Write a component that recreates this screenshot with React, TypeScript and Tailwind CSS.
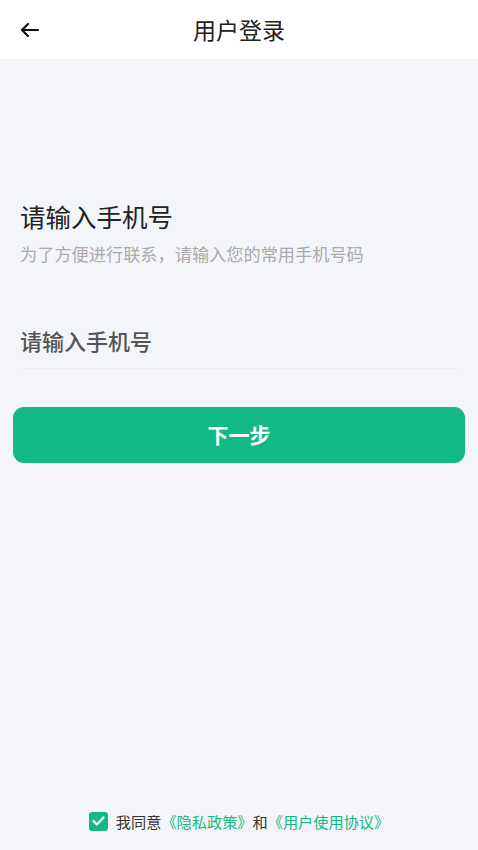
import React, { useState } from 'react'

const font = { fontFamily: '"Noto Sans CJK SC", "Noto Sans", sans-serif' }

const App = () => {
    const [phone, setPhone] = useState('')
    const [agree, setAgree] = useState(true)

    return (
        <div className="w-full h-[850px] bg-[#f4f5f9] flex flex-col text-[#222]" style={font}>
            {/* header */}
            <div className="h-[59px] bg-white flex items-center px-5 relative">
                <svg width="19" height="16" viewBox="0 0 19 16" fill="none" stroke="#111" strokeWidth="2.2" strokeLinecap="round" strokeLinejoin="round">
                    <path d="M18 8H2" />
                    <path d="M8 2L2 8l6 6" />
                </svg>
                <div className="absolute inset-x-0 text-center text-[23px] leading-none text-[#222] pointer-events-none">用户登录</div>
            </div>

            <div className="px-5 pt-[140px]">
                <div className="text-[25.5px] leading-[34px] text-[#222]">请输入手机号</div>
                <div className="mt-[9px] text-[17.2px] leading-[24px] text-[#aaa]">为了方便进行联系，请输入您的常用手机号码</div>

                <div className="mt-[58px] border-b border-[#eceef2] pb-[12px]">
                    <input
                        value={phone}
                        onChange={(e) => setPhone(e.target.value)}
                        placeholder="请输入手机号"
                        className="w-full bg-transparent outline-none text-[22px] leading-[32px] font-medium text-[#333] placeholder:text-[#555]"
                        style={font}
                    />
                </div>
            </div>

            <div className="px-[13px] mt-[38px]">
                <button className="w-full h-[56px] rounded-[11px] bg-[#12b886] text-white text-[21px] font-semibold" style={font}>
                    下一步
                </button>
            </div>

            <div className="flex-1" />

            <div className="flex items-center justify-center gap-2 pb-[19px] text-[15.2px] leading-5">
                <button
                    onClick={() => setAgree(!agree)}
                    className={`w-[19px] h-[19px] rounded-[3px] flex items-center justify-center ${agree ? 'bg-[#12b886]' : 'bg-white border border-[#ccc]'}`}
                >
                    {agree && (
                        <svg width="13" height="10" viewBox="0 0 13 10" fill="none" stroke="white" strokeWidth="2.2" strokeLinecap="round" strokeLinejoin="round">
                            <path d="M1.5 5l3.5 3.5L11.5 1.5" />
                        </svg>
                    )}
                </button>
                <div className="text-[#333]">
                    我同意<span className="text-[#12b886]">《隐私政策》</span>和<span className="text-[#12b886]">《用户使用协议》</span>
                </div>
            </div>
        </div>
    )
}
export default App
